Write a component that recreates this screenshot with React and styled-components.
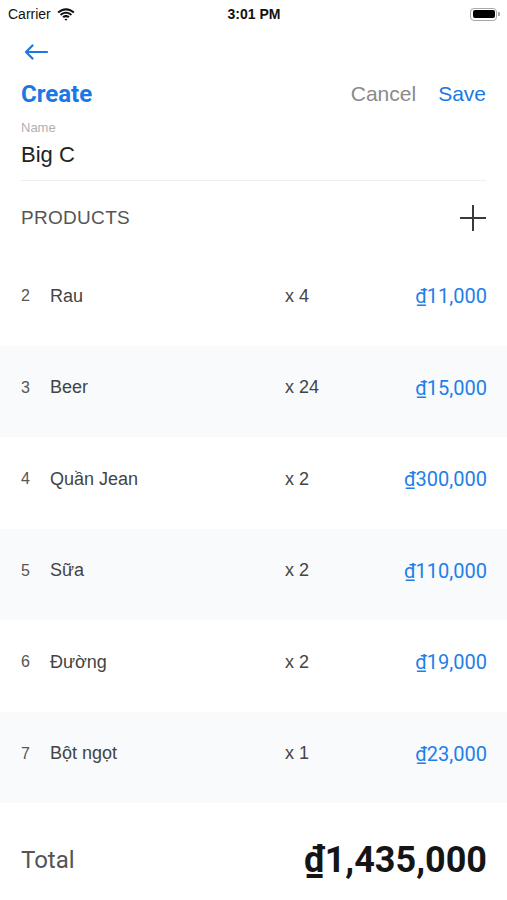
import styled, { createGlobalStyle } from "styled-components"

const GlobalStyle = createGlobalStyle`
    html, body {
        margin: 0;
        padding: 0;
        background: #ffffff;
    }
    body {
        font-family: "Liberation Sans", Arial, sans-serif;
    }
`

const items = [
    { no: 2, name: "Rau", qty: 4, price: "11,000" },
    { no: 3, name: "Beer", qty: 24, price: "15,000" },
    { no: 4, name: "Quần Jean", qty: 2, price: "300,000" },
    { no: 5, name: "Sữa", qty: 2, price: "110,000" },
    { no: 6, name: "Đường", qty: 2, price: "19,000" },
    { no: 7, name: "Bột ngọt", qty: 1, price: "23,000" },
]

const App = () => {
    return (
        <>
            <GlobalStyle />
            <Screen>
                <StatusBar>
                    <div className="left">
                        Carrier
                        <svg width="18" height="13" viewBox="0 0 17 12">
                            <path d="M8.5 2.2c2.6 0 5 1 6.8 2.7l1.3-1.4C14.4 1.3 11.6 0 8.5 0S2.6 1.3.4 3.5l1.3 1.4C3.5 3.2 5.9 2.2 8.5 2.2z" fill="#111" />
                            <path d="M8.5 5.4c1.7 0 3.2.6 4.4 1.7l1.3-1.4C12.7 4.2 10.7 3.3 8.5 3.3S4.3 4.2 2.8 5.7l1.3 1.4c1.2-1.1 2.7-1.7 4.4-1.7z" fill="#111" />
                            <path d="M8.5 8.5c.8 0 1.5.3 2 .8l1.4-1.4c-.9-.9-2.1-1.4-3.4-1.4S6 7 5.1 7.9l1.4 1.4c.5-.5 1.200-.8 2-.8z" fill="#111" />
                            <path d="M8.5 12l1.5-1.5c-.4-.4-.9-.6-1.5-.6s-1.1.2-1.5.6z" fill="#111" />
                        </svg>
                    </div>
                    <div className="time">3:01 PM</div>
                    <Battery>
                        <div className="body"><div className="level" /></div>
                        <div className="cap" />
                    </Battery>
                </StatusBar>

                <NavBar>
                    <svg width="24" height="16" viewBox="0 0 24 16">
                        <path d="M23 8H2M8.5 1.5L2 8l6.5 6.5" fill="none" stroke="#1a78e6" strokeWidth="2.2" strokeLinecap="round" strokeLinejoin="round" />
                    </svg>
                </NavBar>

                <TitleRow>
                    <h1>Create</h1>
                    <div className="actions">
                        <ActionButton muted>Cancel</ActionButton>
                        <ActionButton>Save</ActionButton>
                    </div>
                </TitleRow>

                <Field>
                    <label>Name</label>
                    <div className="value">Big C</div>
                </Field>

                <SectionHeader>
                    <span>PRODUCTS</span>
                    <svg width="28" height="28" viewBox="0 0 28 28">
                        <path d="M14 1v26M1 14h26" stroke="#3a3a3a" strokeWidth="2" />
                    </svg>
                </SectionHeader>

                <List>
                    {items.map((item, i) => (
                        <Row key={item.no} alt={i % 2 === 1}>
                            <span className="no">{item.no}</span>
                            <span className="name">{item.name}</span>
                            <span className="qty">x {item.qty}</span>
                            <span className="price">₫{item.price}</span>
                        </Row>
                    ))}
                </List>

                <TotalRow>
                    <span className="label">Total</span>
                    <span className="amount">₫1,435,000</span>
                </TotalRow>
            </Screen>
        </>
    )
}

export default App

const Screen = styled.div`
    width: 507px;
    height: 900px;
    overflow: hidden;
    background: #ffffff;
    display: flex;
    flex-direction: column;
`

const StatusBar = styled.div`
    height: 28px;
    padding: 0 7px 0 8px;
    display: grid;
    grid-template-columns: 1fr auto 1fr;
    align-items: center;
    font-family: "Liberation Sans", Arial, sans-serif;
    font-size: 14px;
    color: #111;

    .left {
        display: flex;
        align-items: center;
        gap: 6px;
    }

    .time {
        font-weight: 700;
        font-size: 14px;
    }
`

const Battery = styled.div`
    justify-self: end;
    display: flex;
    align-items: center;

    .body {
        width: 27px;
        height: 13px;
        border: 1px solid #a8a8a8;
        border-radius: 4px;
        padding: 1.5px;
        box-sizing: border-box;
    }
    .level {
        width: 100%;
        height: 100%;
        background: #000;
        border-radius: 2px;
    }
    .cap {
        width: 2px;
        height: 4px;
        background: #a8a8a8;
        border-radius: 0 1px 1px 0;
        margin-left: 1px;
    }
`

const NavBar = styled.div`
    height: 48px;
    padding-left: 24px;
    display: flex;
    align-items: center;
`

const TitleRow = styled.div`
    height: 36px;
    padding: 0 21px;
    display: flex;
    align-items: center;
    justify-content: space-between;

    h1 {
        margin: 0;
        font-family: Roboto, "Liberation Sans", sans-serif;
        font-weight: 700;
        font-size: 24px;
        color: #1a78e6;
    }

    .actions {
        display: flex;
        gap: 22px;
    }
`

const ActionButton = styled.span`
    font-family: "Liberation Sans", Arial, sans-serif;
    font-size: 21px;
    color: ${p => (p.muted ? "#8a8a8a" : "#1a78e6")};
`

const Field = styled.div`
    margin: 0 21px;
    padding-top: 8px;
    padding-bottom: 11px;
    border-bottom: 1px solid #eeeeee;
    display: flex;
    flex-direction: column;

    label {
        font-family: "Liberation Sans", Arial, sans-serif;
        font-size: 13px;
        line-height: 16px;
        color: #b0b0b0;
    }

    .value {
        margin-top: 5px;
        font-family: "Liberation Sans", Arial, sans-serif;
        font-size: 22px;
        line-height: 28px;
        color: #222;
    }
`

const SectionHeader = styled.div`
    height: 73px;
    padding: 0 20px 0 21px;
    display: flex;
    align-items: center;
    justify-content: space-between;

    span {
        font-family: "Liberation Sans", Arial, sans-serif;
        font-size: 19px;
        letter-spacing: 0.3px;
        color: #555;
    }
`

const List = styled.div`
    display: flex;
    flex-direction: column;
`

const Row = styled.div`
    height: 91.5px;
    box-sizing: border-box;
    padding: 0 20px 7px 21px;
    display: grid;
    grid-template-columns: 29px 235px auto 1fr;
    align-items: center;
    background: ${p => (p.alt ? "#f8fafc" : "#ffffff")};

    .no {
        font-family: "Liberation Sans", Arial, sans-serif;
        font-size: 16px;
        color: #555;
    }
    .name {
        font-family: "Liberation Sans", Arial, sans-serif;
        font-size: 18px;
        color: #444;
    }
    .qty {
        font-family: "Liberation Sans", Arial, sans-serif;
        font-size: 18px;
        color: #444;
    }
    .price {
        font-family: Roboto, "Liberation Sans", sans-serif;
        font-size: 20px;
        color: #1e80e8;
        text-align: right;
    }
`

const TotalRow = styled.div`
    padding: 32px 20px 0 21px;
    height: 50px;
    display: flex;
    align-items: center;
    justify-content: space-between;

    .label {
        font-family: Roboto, "Liberation Sans", sans-serif;
        font-size: 24px;
        color: #555;
    }
    .amount {
        font-family: Roboto, "Liberation Sans", sans-serif;
        font-weight: 700;
        font-size: 36px;
        color: #151515;
    }
`
